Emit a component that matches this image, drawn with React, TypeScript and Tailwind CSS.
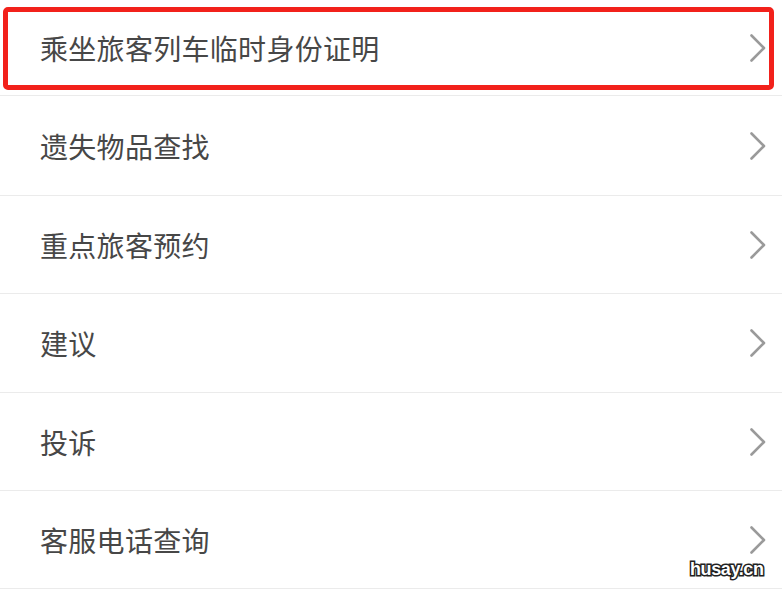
const items = [
  { label: '乘坐旅客列车临时身份证明', h: 'h-[96px]' },
  { label: '遗失物品查找', h: 'h-[100px]' },
  { label: '重点旅客预约', h: 'h-[98px]' },
  { label: '建议', h: 'h-[99px]' },
  { label: '投诉', h: 'h-[98px]' },
  { label: '客服电话查询', h: 'h-[98px]' },
]

function Chevron() {
  return (
    <svg width="18" height="28" viewBox="0 0 18 28" fill="none" className="shrink-0">
      <path d="M2.5 1.5 L15 14 L2.5 26.5" stroke="#9a9a9a" strokeWidth="2.6" strokeLinecap="round" strokeLinejoin="round" />
    </svg>
  )
}

export default function App() {
  return (
    <div className="relative w-[782px] h-[589px] overflow-hidden bg-white font-['Noto_Sans_CJK_SC','Noto_Sans',sans-serif]">
      <ul>
        {items.map((item, i) => (
          <li
            key={item.label}
            className={`relative flex items-center justify-between border-b border-[#ebebeb] pl-[40px] pr-[15px] ${item.h}`}
          >
            <span className="text-[28px] leading-none text-[#474747] tracking-[0.3px]">{item.label}</span>
            <Chevron />
            {i === 0 && (
              <div className="pointer-events-none absolute left-[3px] top-[7px] right-[8px] bottom-[5px] rounded-[5px] border-[5px] border-[#f2211b]" />
            )}
          </li>
        ))}
      </ul>

      {/* watermark */}
      <span className="absolute left-[690px] top-[560px] text-[18px] leading-none font-bold text-white font-['Liberation_Sans',sans-serif] [-webkit-text-stroke:3px_#222] [paint-order:stroke_fill] tracking-[-0.4px]">
        husay.cn
      </span>
    </div>
  )
}
